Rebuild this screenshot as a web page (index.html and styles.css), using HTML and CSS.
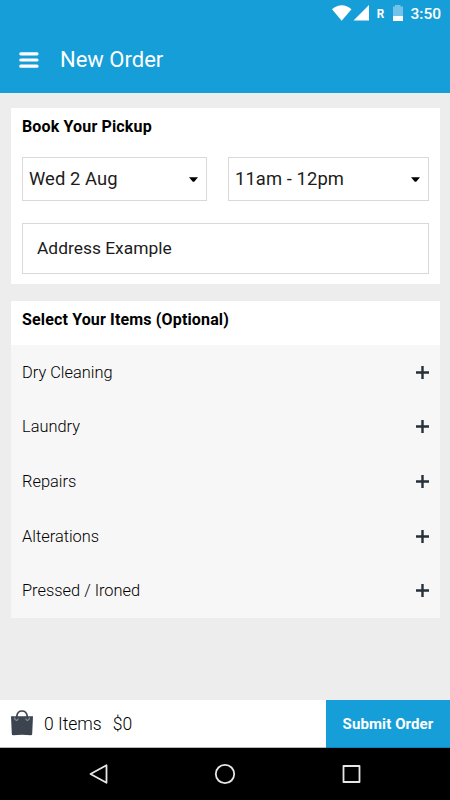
FILE: index.html
```html
<!DOCTYPE html>
<html lang="en">

<head>
    <meta charset="utf-8">
    <meta name="viewport" content="width=device-width">
    <link rel="stylesheet" href="styles.css">
    <title>New Order</title>
</head>

<body>
    <div class="statusbar">
        <svg class="signals" width="74" height="18" viewBox="0 0 74 18">
            <path fill="#fff" d="M0 4.2Q9.7-3.6 19.5 4.2L9.7 15.8z" />
            <path fill="#fff" d="M37 0v15.5H21.5z" />
            <path fill="#73c3e8" d="M61 1.5h2V0h5.5v1.5H71V11H61z" />
            <path fill="#fff" d="M61 11h10v5H61z" />
            <text class="roaming" x="44.7" y="13" textLength="7.5" lengthAdjust="spacingAndGlyphs">R</text>
        </svg>
        <span class="clock">3:50</span>
    </div>
    <header class="toolbar">
        <button class="menu" aria-label="Menu">
            <svg width="20" height="16" viewBox="0 0 20 16">
                <path stroke="#fff" stroke-width="3.2" stroke-linecap="round" d="M1.8 1.8h16.2M1.8 8h16.2M1.8 14.2h16.2" />
            </svg>
        </button>
        <h1>New Order</h1>
    </header>

    <main>
        <section class="card pickup">
            <h2>Book Your Pickup</h2>
            <div class="selects">
                <div class="select date">
                    <span>Wed 2 Aug</span>
                    <svg width="9" height="5" viewBox="0 0 9 5"><path d="M0 .2h9L5.2 4.7H3.8z" /></svg>
                </div>
                <div class="select time">
                    <span>11am - 12pm</span>
                    <svg width="9" height="5" viewBox="0 0 9 5"><path d="M0 .2h9L5.2 4.7H3.8z" /></svg>
                </div>
            </div>
            <div class="address">Address Example</div>
        </section>

        <section class="card items">
            <h2>Select Your Items (Optional)</h2>
            <ul>
                <li><span>Dry Cleaning</span><svg class="plus" viewBox="0 0 13 13"><path d="M0 6.5h13M6.5 0v13" /></svg></li>
                <li><span>Laundry</span><svg class="plus" viewBox="0 0 13 13"><path d="M0 6.5h13M6.5 0v13" /></svg></li>
                <li><span>Repairs</span><svg class="plus" viewBox="0 0 13 13"><path d="M0 6.5h13M6.5 0v13" /></svg></li>
                <li><span>Alterations</span><svg class="plus" viewBox="0 0 13 13"><path d="M0 6.5h13M6.5 0v13" /></svg></li>
                <li><span>Pressed / Ironed</span><svg class="plus" viewBox="0 0 13 13"><path d="M0 6.5h13M6.5 0v13" /></svg></li>
            </ul>
        </section>
    </main>

    <footer class="basket">
        <svg class="bag" width="22" height="26" viewBox="0 0 22 26">
            <path fill="#3c444f" d="M0 6.3h22L21.2 24q-.1 1.2-1.3 1.2-8.9-1-17.8 0Q.9 25.2.8 24z" />
            <path fill="none" stroke="#8b919a" stroke-width="1.2" d="M3.6 7.5q0 3 2.3 2.8 1.2-.2 1.2-2M14.9 8.3q0 1.8 1.2 2 2.3.2 2.3-2.8" />
            <path fill="none" stroke="#3c444f" stroke-width="1.7" d="M5.8 9V6Q6.5 1 11 1t5.200 5v3" />
        </svg>
        <span class="count">0 Items</span>
        <span class="total">$0</span>
        <button class="submit">Submit Order</button>
    </footer>

    <nav class="navbar">
        <svg width="20" height="22" viewBox="0 0 20 22">
            <path d="M17.5 2.2v17.600L1.500 11z" />
        </svg>
        <svg width="22" height="22" viewBox="0 0 22 22">
            <circle cx="11" cy="11" r="9.2" />
        </svg>
        <svg width="20" height="20" viewBox="0 0 20 20">
            <path d="M2.5 2h16v16h-16z" />
        </svg>
    </nav>
</body>

</html>
```

FILE: styles.css
```css
body,
html {
    width: 100%;
    height: 100%;
}

* {
    box-sizing: border-box;
}

body {
    display: flex;
    flex-direction: column;
    background-color: #ededed;
    color: #000;
    font-family: Roboto, sans-serif;
    font-weight: 300;
}

body, h1, h2, ul {
    margin: 0;
    padding: 0;
}

svg {
    display: block;
    flex: none;
}

button {
    border: 0;
    padding: 0;
    background: none;
    font-family: inherit;
}

/* top bars */
.statusbar {
    display: flex;
    justify-content: flex-end;
    height: 27px;
    padding: 5px 9px 0 0;
    background-color: #169ed9;
    color: #fff;
}

.roaming {
    fill: #fff;
    font-size: 12.5px;
    font-weight: 700;
}

.clock {
    margin-left: 4px;
    font-size: 15.5px;
    font-weight: 500;
    line-height: 18px;
}

.toolbar {
    display: flex;
    align-items: center;
    height: 66px;
    padding-left: 19px;
    background-color: #169ed9;
    color: #fff;
}

.toolbar h1 {
    margin-left: 21px;
    font-size: 22px;
    font-weight: 400;
    line-height: 26px;
}

/* cards */
main {
    flex: 1;
    padding: 15px 10px 0 11px;
}

.card {
    background-color: #fff;
}

h2 {
    font-size: 16px;
    font-weight: 700;
    letter-spacing: 0.15px;
    line-height: 20px;
}

.pickup {
    height: 176px;
    padding: 9px 11px 0;
}

.selects {
    display: flex;
    gap: 21px;
    margin-top: 20px;
}

.select {
    display: flex;
    align-items: center;
    justify-content: space-between;
    height: 44px;
    padding: 0 8px 2px 6px;
    border: 1px solid #d9d9d9;
    color: #1c1c1c;
    font-size: 18.4px;
    font-weight: 400;
    letter-spacing: 0.08px;
}

.select svg {
    margin-top: 2px;
}

.date {
    width: 185px;
}

.time {
    flex: 1;
}

.address {
    height: 51px;
    margin-top: 22px;
    padding-left: 14px;
    border: 1px solid #d9d9d9;
    color: #1c1c1c;
    font-size: 17.4px;
    font-weight: 400;
    line-height: 49px;
}

.items {
    margin-top: 17px;
}

.items h2 {
    height: 44px;
    padding: 9px 11px 0;
}

.items ul {
    background-color: #f7f7f7;
    list-style: none;
}

.items li {
    display: flex;
    align-items: center;
    justify-content: space-between;
    height: 54.6px;
    padding: 0 11px;
    font-size: 16.4px;
}

.plus {
    width: 13px;
    height: 13px;
    stroke: #263038;
    stroke-width: 2.4;
}

/* bottom bars */
.basket {
    display: flex;
    align-items: center;
    height: 48px;
    padding-left: 11px;
    background-color: #fff;
    border-bottom: 1px solid #b5b8b8;
    font-size: 17.5px;
}

.bag {
    margin-top: -1px;
}

.count {
    margin-left: 11px;
}

.total {
    margin-left: 11px;
}

.submit {
    width: 124px;
    height: 48px;
    margin: 0 0 -1px auto;
    background-color: #169ed9;
    border-bottom: 1px solid #0e83b8;
    color: #fff;
    font-size: 15px;
    font-weight: 700;
    letter-spacing: 0.1px;
}

.navbar {
    display: flex;
    align-items: center;
    justify-content: space-between;
    height: 52px;
    padding: 0 89px;
    background-color: #000;
}

.navbar svg {
    fill: none;
    stroke: #e6e6e6;
    stroke-width: 1.8;
    stroke-linejoin: round;
}
```
